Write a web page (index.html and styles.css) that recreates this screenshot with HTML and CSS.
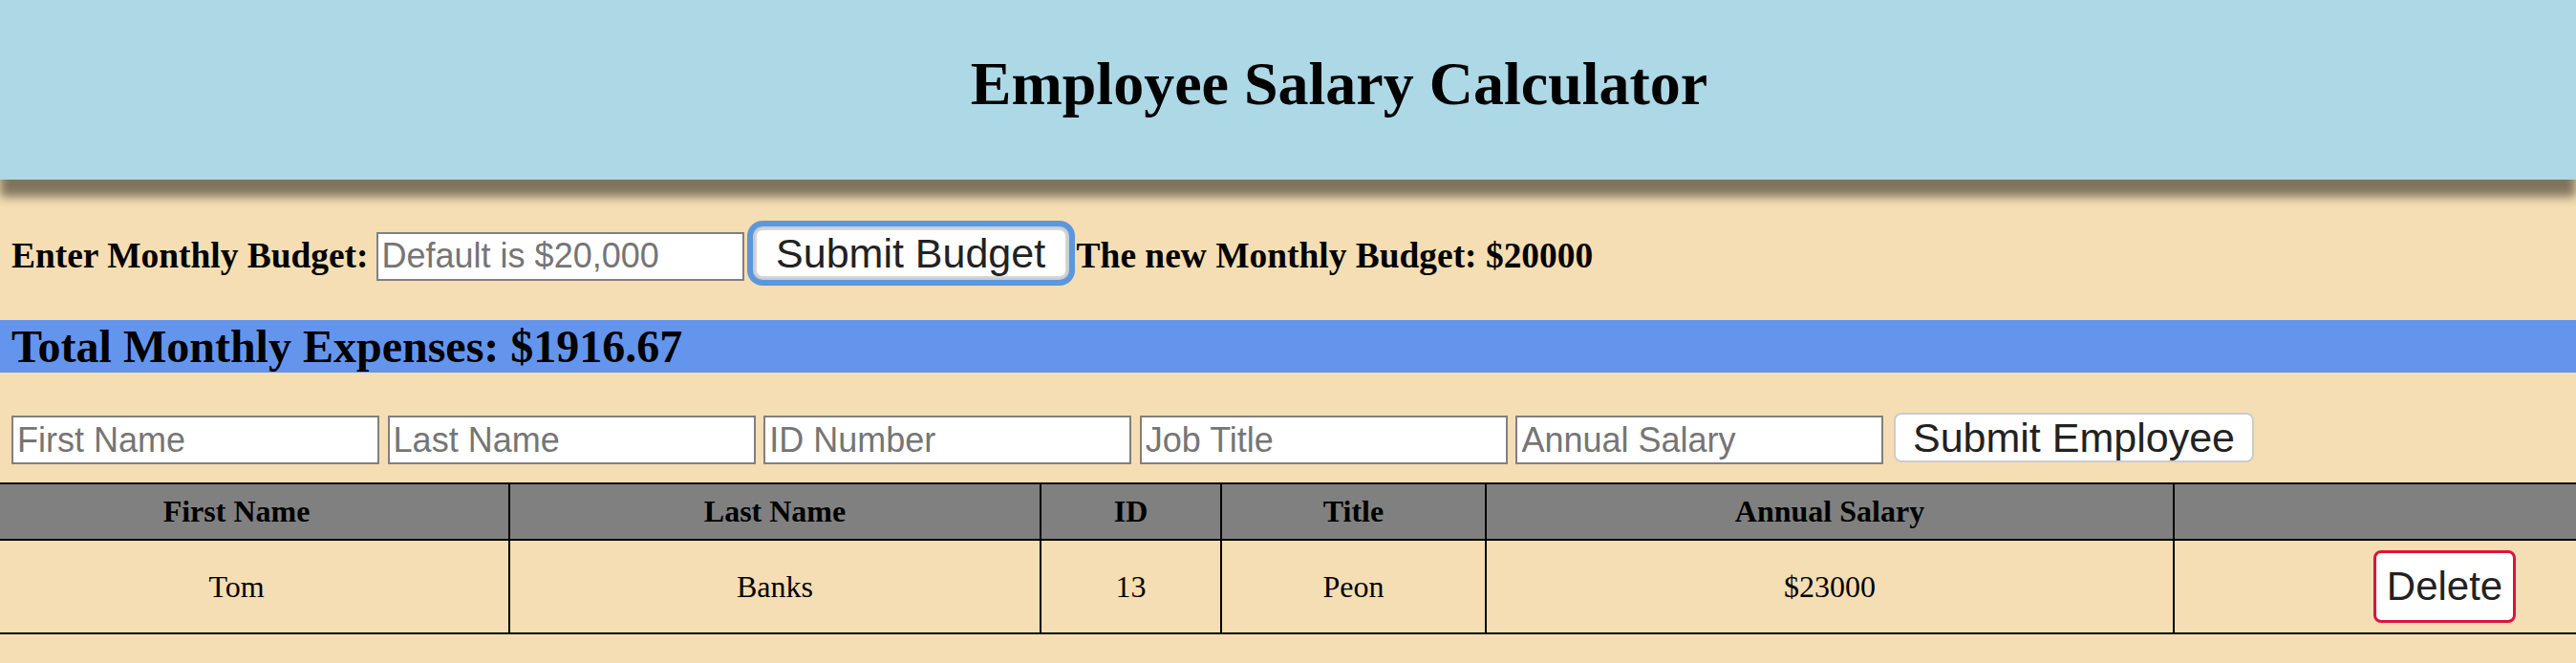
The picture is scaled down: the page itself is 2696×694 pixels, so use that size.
FILE: index.html
```html
<!DOCTYPE html>
<html lang="en">
<head>
<meta charset="utf-8">
<title>Employee Salary Calculator</title>
<link rel="stylesheet" href="styles.css">
</head>
<body>
<header class="site-header">
  <h1 class="site-title">Employee Salary Calculator</h1>
</header>
<main class="content">
  <div class="budget-row">
    <label class="budget-label" for="budget">Enter Monthly Budget:</label>
    <input class="field" id="budget" type="text" placeholder="Default is $20,000">
    <button class="btn btn-focus" type="button">Submit Budget</button>
    <span class="budget-result">The new Monthly Budget: $20000</span>
  </div>
  <h2 class="expenses">Total Monthly Expenses: $1916.67</h2>
  <div class="employee-form">
    <input class="field" type="text" placeholder="First Name">
    <input class="field" type="text" placeholder="Last Name">
    <input class="field" type="text" placeholder="ID Number">
    <input class="field" type="text" placeholder="Job Title">
    <input class="field" type="text" placeholder="Annual Salary">
    <button class="btn" type="button">Submit Employee</button>
  </div>
  <table class="employees">
    <colgroup>
      <col class="col-first">
      <col class="col-last">
      <col class="col-id">
      <col class="col-title">
      <col class="col-salary">
      <col class="col-action">
    </colgroup>
    <thead>
      <tr>
        <th>First Name</th>
        <th>Last Name</th>
        <th>ID</th>
        <th>Title</th>
        <th>Annual Salary</th>
        <th></th>
      </tr>
    </thead>
    <tbody>
      <tr>
        <td>Tom</td>
        <td>Banks</td>
        <td>13</td>
        <td>Peon</td>
        <td>$23000</td>
        <td><button class="btn btn-delete" type="button">Delete</button></td>
      </tr>
    </tbody>
  </table>
</main>
</body>
</html>
```

FILE: styles.css
```css
html, body {
  margin: 0;
  padding: 0;
  background: #F5DEB3;
}

body {
  font-family: "Liberation Serif", "Times New Roman", serif;
  color: #000;
}

.site-header {
  position: relative;
  z-index: 1;
  box-sizing: border-box;
  height: 188px;
  padding: 51px 0 0 107px;
  background: #ADD8E6;
  box-shadow: 0 18px 10px rgba(0, 0, 0, 0.48);
}

.site-title {
  margin: 0;
  font-size: 64px;
  font-weight: bold;
  text-align: center;
}

.budget-row {
  display: flex;
  align-items: baseline;
  margin-top: 51px;
  padding-left: 12px;
}

.budget-label,
.budget-result {
  font-size: 37.44px;
  font-weight: bold;
}

.budget-label {
  margin-right: 8px;
}

.budget-row .btn {
  margin-left: 11px;
  margin-right: 10px;
}

.field {
  box-sizing: border-box;
  width: 385px;
  height: 51px;
  margin: 0;
  padding: 0 4px;
  border: 2px solid #808080;
  background: #fff;
  color: #000;
  font-family: "Liberation Sans", Arial, sans-serif;
  font-size: 36px;
}

.field::placeholder {
  color: #757575;
  opacity: 1;
}

.btn {
  box-sizing: border-box;
  height: 52px;
  margin: 0;
  padding: 0 18px;
  border: 2px solid #cccccc;
  border-radius: 8px;
  background: #fff;
  color: #222;
  font-family: "Liberation Sans", Arial, sans-serif;
  font-size: 43px;
  line-height: 46px;
}

.btn-focus {
  padding: 0 20.5px;
  border-color: #d6d6d6;
  box-shadow: 0 0 0 2px #c3ccd8, 0 0 0 8px #5e96dc;
}

.expenses {
  margin: 41px 0 0;
  padding-left: 12px;
  background: #6495ED;
  font-size: 48px;
  font-weight: bold;
}

.employee-form {
  display: flex;
  align-items: baseline;
  gap: 8.6px;
  margin-top: 42px;
  padding-left: 12px;
}

.employee-form .btn {
  margin-left: 2px;
}

.employees {
  width: 100%;
  margin-top: 19px;
  border-collapse: collapse;
  table-layout: fixed;
}

.col-first { width: 533px; }
.col-last { width: 556px; }
.col-id { width: 189px; }
.col-title { width: 277px; }
.col-salary { width: 720px; }
.col-action { width: 421px; }

.employees th,
.employees td {
  padding: 10px;
  border: 2px solid #000;
  text-align: center;
  vertical-align: middle;
  font-size: 32px;
}

.employees th:first-child,
.employees td:first-child {
  border-left: none;
  padding-right: 47px;
}

.employees th:last-child,
.employees td:last-child {
  border-right: none;
  padding-left: 155px;
}

.employees th {
  background: #808080;
  font-weight: bold;
}

.btn-delete {
  height: auto;
  padding: 11px 11px;
  border: 3px solid #DC143C;
  border-radius: 8px;
  font-size: 42px;
  line-height: 48px;
}
```
